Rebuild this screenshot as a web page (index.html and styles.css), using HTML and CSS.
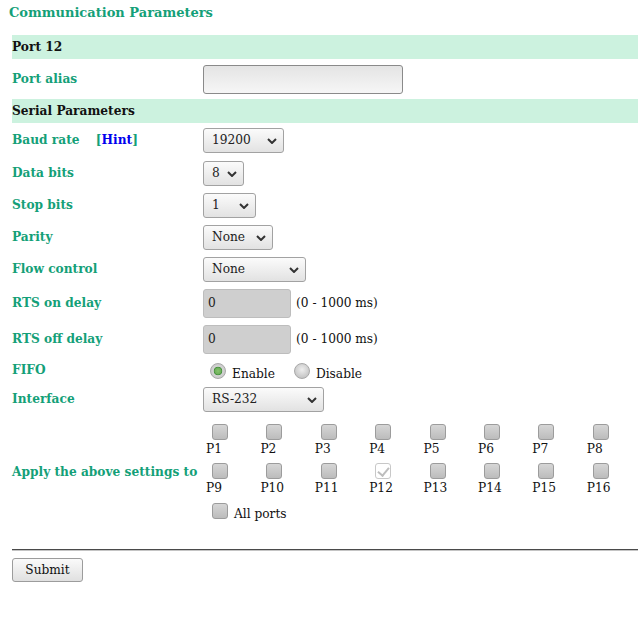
FILE: index.html
```html
<!DOCTYPE html>
<html>
<head>
<meta charset="utf-8">
<title>Communication Parameters</title>
<link rel="stylesheet" href="styles.css">
</head>
<body>
<div class="page">
  <h1 class="title">Communication Parameters</h1>
  <div class="form">
    <div class="band">Port 12</div>
    <div class="row row-alias">
      <div class="lbl">Port alias</div>
      <div class="val"><input class="txt alias" type="text" value=""></div>
    </div>
    <div class="band">Serial Parameters</div>
    <div class="row row-first">
      <div class="lbl">Baud rate <span class="hint">[<a href="#">Hint</a>]</span></div>
      <div class="val"><span class="sel w-baud"><select><option>19200</option></select><svg class="chev" width="10" height="6" viewBox="0 0 10 6"><path d="M1 1 L5 5 L9 1" fill="none" stroke="#333" stroke-width="2"/></svg></span></div>
    </div>
    <div class="row">
      <div class="lbl">Data bits</div>
      <div class="val"><span class="sel w-data"><select><option>8</option></select><svg class="chev" width="10" height="6" viewBox="0 0 10 6"><path d="M1 1 L5 5 L9 1" fill="none" stroke="#333" stroke-width="2"/></svg></span></div>
    </div>
    <div class="row">
      <div class="lbl">Stop bits</div>
      <div class="val"><span class="sel w-stop"><select><option>1</option></select><svg class="chev" width="10" height="6" viewBox="0 0 10 6"><path d="M1 1 L5 5 L9 1" fill="none" stroke="#333" stroke-width="2"/></svg></span></div>
    </div>
    <div class="row">
      <div class="lbl">Parity</div>
      <div class="val"><span class="sel w-parity"><select><option>None</option></select><svg class="chev" width="10" height="6" viewBox="0 0 10 6"><path d="M1 1 L5 5 L9 1" fill="none" stroke="#333" stroke-width="2"/></svg></span></div>
    </div>
    <div class="row">
      <div class="lbl">Flow control</div>
      <div class="val"><span class="sel w-flow"><select><option>None</option></select><svg class="chev" width="10" height="6" viewBox="0 0 10 6"><path d="M1 1 L5 5 L9 1" fill="none" stroke="#333" stroke-width="2"/></svg></span></div>
    </div>
    <div class="row row-tall">
      <div class="lbl">RTS on delay</div>
      <div class="val"><input class="txt delay" type="text" value="0"><span class="unit">(0 - 1000 ms)</span></div>
    </div>
    <div class="row row-tall">
      <div class="lbl">RTS off delay</div>
      <div class="val"><input class="txt delay" type="text" value="0"><span class="unit">(0 - 1000 ms)</span></div>
    </div>
    <div class="row row-short">
      <div class="lbl lbl-fifo">FIFO</div>
      <div class="val val-radio">
        <label class="opt"><input type="radio" name="fifo" checked><span>Enable</span></label>
        <label class="opt"><input type="radio" name="fifo"><span>Disable</span></label>
      </div>
    </div>
    <div class="row row-short">
      <div class="lbl">Interface</div>
      <div class="val"><span class="sel w-iface"><select><option>RS-232</option></select><svg class="chev" width="10" height="6" viewBox="0 0 10 6"><path d="M1 1 L5 5 L9 1" fill="none" stroke="#333" stroke-width="2"/></svg></span></div>
    </div>
    <div class="row row-apply">
      <div class="lbl">Apply the above settings to</div>
      <div class="val val-ports">
        <div class="ports">
          <label class="port"><input type="checkbox"><span>P1</span></label>
          <label class="port"><input type="checkbox"><span>P2</span></label>
          <label class="port"><input type="checkbox"><span>P3</span></label>
          <label class="port"><input type="checkbox"><span>P4</span></label>
          <label class="port"><input type="checkbox"><span>P5</span></label>
          <label class="port"><input type="checkbox"><span>P6</span></label>
          <label class="port"><input type="checkbox"><span>P7</span></label>
          <label class="port"><input type="checkbox"><span>P8</span></label>
          <label class="port"><input type="checkbox"><span>P9</span></label>
          <label class="port"><input type="checkbox"><span>P10</span></label>
          <label class="port"><input type="checkbox"><span>P11</span></label>
          <label class="port"><input type="checkbox" checked disabled><span>P12</span></label>
          <label class="port"><input type="checkbox"><span>P13</span></label>
          <label class="port"><input type="checkbox"><span>P14</span></label>
          <label class="port"><input type="checkbox"><span>P15</span></label>
          <label class="port"><input type="checkbox"><span>P16</span></label>
        </div>
        <label class="allports"><input type="checkbox"><span>All ports</span></label>
      </div>
    </div>
  </div>
  <div class="rule"></div>
  <button class="submit" type="button">Submit</button>
</div>
</body>
</html>
```
FILE: styles.css
```css
html, body {
  margin: 0;
  padding: 0;
  background: #ffffff;
}
body {
  font-family: "DejaVu Serif", serif;
  font-size: 12.2px;
  color: #111;
}
.page {
  padding: 0 2px 0 12px;
  width: 626px;
}
.title {
  margin: 5px 0 14px -3px;
  font-size: 13px;
  line-height: 16px;
  font-weight: bold;
  color: #14a078;
}
.form {
  width: 626px;
}
.band {
  height: 24px;
  line-height: 24px;
  background: #ccf2df;
  font-weight: bold;
  color: #111;
}
.row {
  display: flex;
  align-items: center;
  height: 32px;
}
.row-alias { height: 40px; }
.row-first { height: 34px; }
.row-tall { height: 36px; }
.row-short { height: 28px; }
.lbl {
  width: 191px;
  flex: none;
  font-weight: bold;
  color: #14a078;
}
.lbl-fifo { margin-top: -3px; }
.hint { margin-left: 12px; }
.hint a {
  color: #0000ee;
  text-decoration: none;
}
.val {
  display: flex;
  align-items: center;
}
.txt {
  box-sizing: border-box;
  height: 29px;
  border: 1px solid #8a8a8a;
  border-radius: 3px;
  font-family: "DejaVu Serif", serif;
  font-size: 12.2px;
  padding: 0 4px;
  margin: 0;
  color: #222;
}
.alias {
  width: 200px;
  background: linear-gradient(#e4e4e4, #f6f6f6);
}
.delay {
  width: 88px;
  background: #cfcfcf;
  border-color: #bdbdbd;
}
.unit { margin-left: 5px; }
.sel {
  position: relative;
  display: inline-block;
  height: 25px;
}
.sel select {
  appearance: none;
  -webkit-appearance: none;
  box-sizing: border-box;
  height: 25px;
  margin: 0;
  padding: 0 0 0 8px;
  border: 1px solid #a2a2a2;
  border-radius: 3px;
  background: linear-gradient(#fbfbfb, #e2e2e2);
  font-family: "DejaVu Serif", serif;
  font-size: 12.2px;
  color: #222;
}
.sel .chev {
  position: absolute;
  right: 7px;
  top: 10px;
  pointer-events: none;
}
.w-baud select { width: 81px; }
.w-data select { width: 41px; }
.w-stop select { width: 53px; }
.w-parity select { width: 70px; }
.w-flow select { width: 103px; }
.w-iface select { width: 121px; }
.val-radio {
  padding-left: 7px;
  gap: 19px;
}
.opt {
  display: flex;
  align-items: center;
}
.opt span { margin-top: 5px; }
input[type="radio"] {
  appearance: none;
  -webkit-appearance: none;
  width: 16px;
  height: 16px;
  margin: 0 6px 0 0;
  border: 1px solid #a8a8a8;
  border-radius: 50%;
  background: radial-gradient(circle at 50% 40%, #eeeeee 0, #d0d0d0 55%, #b8b8b8 100%);
  box-sizing: border-box;
}
input[type="radio"]:checked {
  background: radial-gradient(circle at 50% 50%, #86c46e 0, #6fb05a 3px, #3f8a3a 4px, #d4d4d4 4.6px, #c0c0c0 100%);
}
input[type="checkbox"] {
  appearance: none;
  -webkit-appearance: none;
  width: 16px;
  height: 16px;
  margin: 0;
  border: 1px solid #9c9c9c;
  border-radius: 3px;
  background: linear-gradient(#d6d6d6, #bcbcbc);
  box-sizing: border-box;
  display: block;
}
input[type="checkbox"]:checked {
  background: #ffffff;
  border-color: #c8c8c8;
  position: relative;
}
input[type="checkbox"]:checked::after {
  content: "";
  position: absolute;
  left: 4px;
  top: 1px;
  width: 5px;
  height: 9px;
  border-right: 2px solid #bdbdbd;
  border-bottom: 2px solid #bdbdbd;
  transform: rotate(40deg);
}
.row-apply {
  height: auto;
  padding: 11px 0 8px;
}
.val-ports {
  flex-direction: column;
  align-items: flex-start;
  padding-left: 3px;
}
.ports {
  display: grid;
  grid-template-columns: repeat(8, 54.4px);
  row-gap: 7px;
}
.port {
  display: flex;
  flex-direction: column;
  align-items: flex-start;
}
.port input { margin-left: 6px; }
.port span {
  line-height: 14px;
  margin-top: 2px;
}
.allports {
  display: flex;
  align-items: flex-end;
  margin-top: 8px;
}
.allports input { margin-left: 6px; }
.allports span {
  margin-left: 6px;
  line-height: 14px;
  margin-bottom: -2px;
}
.rule {
  margin-top: 22px;
  width: 626px;
  height: 1px;
  background: #4a4a4a;
  border-bottom: 1px solid #c4c4c4;
}
.submit {
  margin-top: 7px;
  width: 71px;
  height: 24px;
  box-sizing: border-box;
  border: 1px solid #9c9c9c;
  border-radius: 3px;
  background: linear-gradient(#fafafa, #e0e0e0);
  font-family: "DejaVu Serif", serif;
  font-size: 12.2px;
  color: #111;
  padding: 0;
}
```
